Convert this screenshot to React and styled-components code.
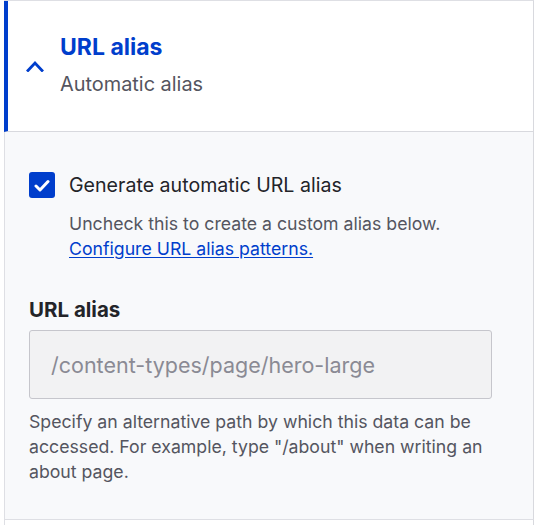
import React from "react";
import styled, { createGlobalStyle } from "styled-components";

const Global = createGlobalStyle`
  html, body { margin: 0; padding: 0; background: #ffffff; }
  body { font-family: Inter, "Noto Sans", sans-serif; color: #232429; }
  * { box-sizing: border-box; }
`;

const Page = styled.div`
  padding-left: 4px;
  width: 534px;
  height: 525px;
  overflow: hidden;
`;

const Details = styled.section`
  border-top: 1px solid #dedfe4;
  border-right: 1px solid #d8d9de;
  background: #ffffff;
`;

const Summary = styled.div`
  display: flex;
  align-items: center;
  gap: 16px;
  height: 131px;
  padding-left: 18px;
  border-left: 4px solid #003ecc;
  border-bottom: 1px solid #d8d9de;
  background: #ffffff;
`;

const Titles = styled.div`
  display: flex;
  flex-direction: column;
`;

const Title = styled.span`
  font-size: 23px;
  font-weight: 700;
  line-height: 36px;
  color: #003ecc;
`;

const Subtitle = styled.span`
  font-size: 19.9px;
  line-height: 38px;
  color: #545560;
`;

const Body = styled.div`
  background: #f8f9fb;
  border-left: 1px solid #dedfe4;
  padding: 40px 24px 40px 24px;
  height: 387px;
`;

const CheckRow = styled.label`
  display: flex;
  align-items: center;
  gap: 14px;
`;

const Box = styled.span`
  width: 26px;
  height: 26px;
  border-radius: 3px;
  background: #003ecc;
  display: flex;
  align-items: center;
  justify-content: center;
  flex: none;
`;

const CheckLabel = styled.span`
  font-size: 19.6px;
  line-height: 26px;
  color: #232429;
`;

const Description = styled.div`
  margin: 13px 0 0 40px;
  font-size: 17.7px;
  line-height: 25px;
  color: #545560;
`;

const Link = styled.a`
  color: #003ecc;
  text-decoration: underline;
  text-underline-offset: 2px;
`;

const Field = styled.div`
  margin-top: 36px;
`;

const FieldLabel = styled.div`
  font-size: 20.5px;
  font-weight: 700;
  line-height: 26px;
  color: #232429;
`;

const Input = styled.div`
  margin-top: 7px;
  width: 463px;
  height: 69px;
  border: 1px solid #c6c6cc;
  border-radius: 3px;
  background: #f2f2f3;
  display: flex;
  align-items: center;
  padding-left: 21px;
  font-size: 21.5px;
  color: #8a8a94;
`;

const Help = styled.div`
  margin-top: 10px;
  font-size: 17.7px;
  line-height: 25px;
  color: #545560;
`;

const Next = styled.section`
  border-top: 1px solid #dedfe4;
  border-left: 1px solid #dedfe4;
  border-right: 1px solid #d8d9de;
  height: 20px;
  background: #ffffff;
`;

const Chevron = () => (
  <svg width="18" height="12" viewBox="0 0 18 12" fill="none">
    <path d="M2 10.5 L9 3 L16 10.5" stroke="#003ecc" strokeWidth="2.8" strokeLinecap="square" />
  </svg>
);

const Check = () => (
  <svg width="16" height="13" viewBox="0 0 16 13" fill="none">
    <path d="M2 7 L6 11 L14 2.5" stroke="#ffffff" strokeWidth="3" strokeLinecap="round" strokeLinejoin="round" />
  </svg>
);

export default function App() {
  return (
    <>
      <Global />
      <Page>
        <Details>
          <Summary>
            <Chevron />
            <Titles>
              <Title>URL alias</Title>
              <Subtitle>Automatic alias</Subtitle>
            </Titles>
          </Summary>
          <Body>
            <CheckRow>
              <Box><Check /></Box>
              <CheckLabel>Generate automatic URL alias</CheckLabel>
            </CheckRow>
            <Description>
              Uncheck this to create a custom alias below.
              <br />
              <Link href="#">Configure URL alias patterns.</Link>
            </Description>
            <Field>
              <FieldLabel>URL alias</FieldLabel>
              <Input>/content-types/page/hero-large</Input>
              <Help>
                Specify an alternative path by which this data can be accessed. For example, type "/about" when writing an about page.
              </Help>
            </Field>
          </Body>
        </Details>
        <Next />
      </Page>
    </>
  );
}
